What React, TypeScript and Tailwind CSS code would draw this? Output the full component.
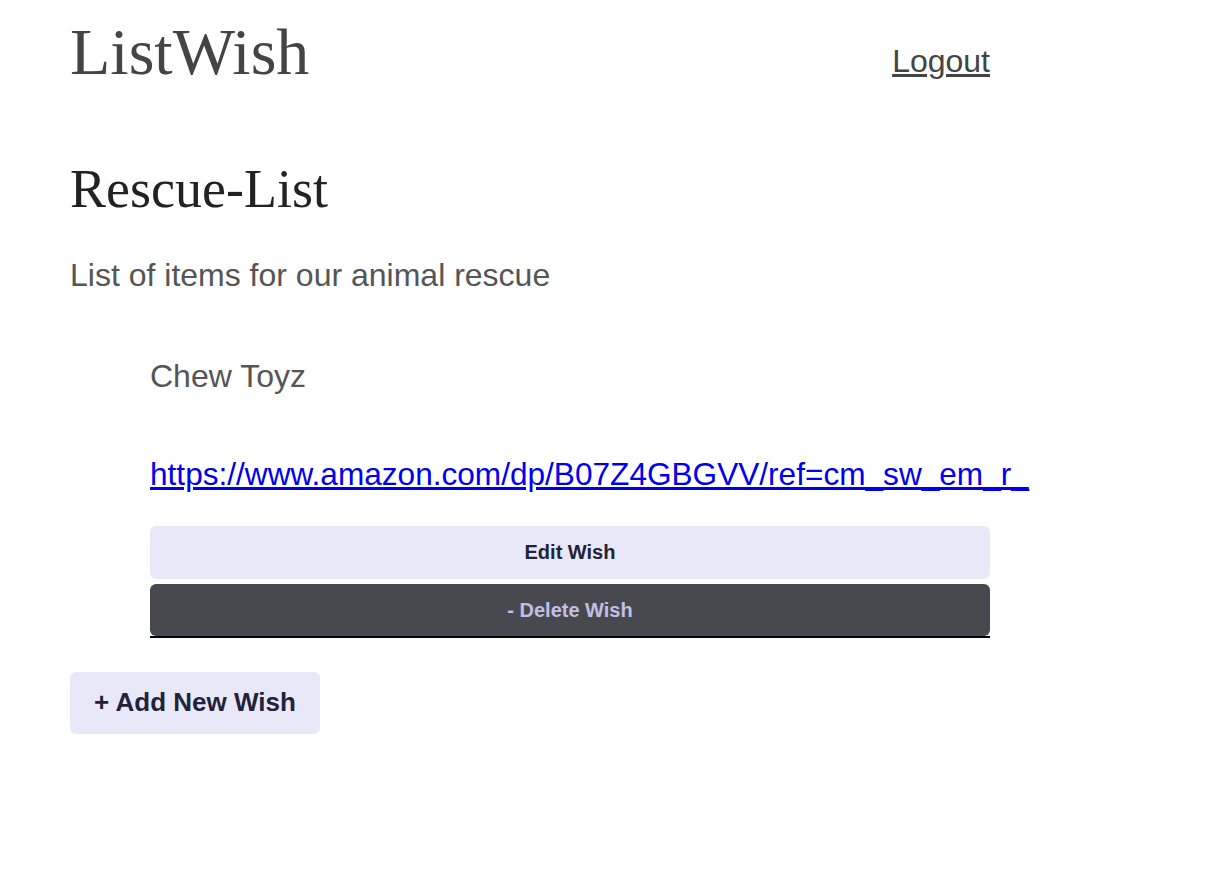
import React from "react";

const serif = { fontFamily: '"Liberation Serif", "DejaVu Serif", serif' };

export default function App() {
  return (
    <div
      className="min-h-screen bg-white px-[70px] pt-[14px]"
      style={{ fontFamily: '"Liberation Sans", Arial, sans-serif' }}
    >
      <div className="w-[920px]">
        {/* header */}
        <header className="flex items-center justify-between h-[80px]">
          <h1 className="text-[66px] leading-none text-[#444] -mt-[4px]" style={serif}>
            ListWish
          </h1>
          <a href="#" className="text-[32px] leading-none text-[#444] underline mt-[14px]">
            Logout
          </a>
        </header>

        <h2 className="mt-[68px] text-[54px] leading-none text-[#222]" style={serif}>
          Rescue-List
        </h2>
        <p className="mt-[43px] text-[32px] leading-none text-[#555]">
          List of items for our animal rescue
        </p>

        {/* wishes */}
        <ul className="mt-[69px] pl-[80px]">
          <li>
            <div className="text-[32px] leading-none text-[#555]">Chew Toyz</div>
            <a
              href="#"
              className="mt-[67px] block text-[31.6px] leading-none text-[#0000ee] underline whitespace-nowrap"
            >
              https://www.amazon.com/dp/B07Z4GBGVV/ref=cm_sw_em_r_
            </a>
            <div className="mt-[35px] flex flex-col gap-[5px]">
              <button className="h-[53px] w-full rounded-[6px] bg-[#e9e8f8] text-[20px] font-bold text-[#22223a]">
                Edit Wish
              </button>
              <div className="border-b-2 border-black">
                <button className="h-[52px] w-full rounded-[6px] bg-[#48494f] text-[20px] font-bold text-[#c2bfe6]">
                  - Delete Wish
                </button>
              </div>
            </div>
          </li>
        </ul>

        <button className="mt-[34px] h-[62px] w-[250px] rounded-[6px] bg-[#e9e8f8] text-[26px] font-bold text-[#22223a]">
          + Add New Wish
        </button>
      </div>
    </div>
  );
}
